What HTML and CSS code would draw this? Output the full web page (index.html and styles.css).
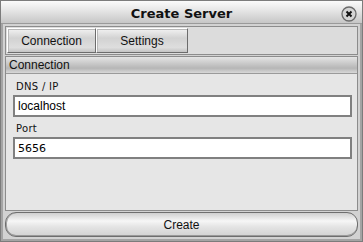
FILE: index.html
```
<!DOCTYPE html>
<html lang="en">
<head>
    <meta charset="UTF-8">
    <title>Create Server</title>
    <link rel="stylesheet" href="styles.css">
</head>
<body>
    <div class="window">
        <div class="titlebar">
            <span class="title">Create Server</span>
            <span class="close">
                <svg width="16" height="16" viewBox="0 0 16 16">
                    <circle cx="8" cy="8" r="7" fill="#d4d4d4" stroke="#6a6a6a" stroke-width="1.3"/>
                    <path d="M5.5 5.5 L10.5 10.5 M10.5 5.5 L5.5 10.5" stroke="#111" stroke-width="2"/>
                </svg>
            </span>
        </div>
        <div class="frame">
            <div class="tabs">
                <button class="tab">Connection</button>
                <button class="tab">Settings</button>
            </div>
            <div class="panel">
                <div class="panel-header">Connection</div>
                <div class="panel-body">
                    <label class="label">DNS / IP</label>
                    <input class="field" type="text" value="localhost">
                    <label class="label">Port</label>
                    <input class="field mono" type="text" value="5656">
                </div>
            </div>
            <button class="create">Create</button>
        </div>
    </div>
</body>
</html>
```

FILE: styles.css
```
body {
    margin: 0;
    font-family: 'Liberation Sans', Arial, sans-serif;
    background-color: #c8c8c8;
}

.window {
    width: 363px;
    height: 242px;
    box-sizing: border-box;
    border: 1px solid #7c7c7c;
    background-color: #d2d2d2;
    display: flex;
    flex-direction: column;
}

.titlebar {
    height: 22px;
    position: relative;
    display: flex;
    justify-content: center;
    align-items: center;
    background: linear-gradient(#fbfbfb, #e2e2e2 50%, #c6c6c6);
    border-bottom: 1px solid #9a9a9a;
}

.title {
    font-family: 'DejaVu Sans', sans-serif;
    font-weight: bold;
    font-size: 13px;
    color: #111;
    padding-top: 3px;
}

.close {
    position: absolute;
    right: 5px;
    top: 5px;
    width: 16px;
    height: 16px;
}

.frame {
    flex: 1;
    display: flex;
    flex-direction: column;
    padding: 2px 2px 2px 2px;
    border-left: 2px solid #a4a4a4;
    border-right: 2px solid #a4a4a4;
    border-bottom: 2px solid #a4a4a4;
}

.tabs {
    display: flex;
    padding: 1px;
    height: 25px;
    background-color: #dcdcdc;
    border: 1px solid #8c8c8c;
}

.tab {
    width: 89px;
    height: 25px;
    font-family: 'Liberation Sans', Arial, sans-serif;
    font-size: 12px;
    color: #111;
    background: linear-gradient(#f2f2f2, #d2d2d2 40%, #dedede 80%, #c4c4c4);
    border: 1px solid #6c6c6c;
    border-top-color: #ffffff;
    border-left-color: #ffffff;
    box-shadow: inset 1px 1px 0 #b8b8b8;
    padding: 0;
}

.tab + .tab {
    width: 92px;
}

.panel {
    flex: 1;
    margin-top: 1px;
    display: flex;
    flex-direction: column;
    background-color: #e6e6e6;
    border: 1px solid #8c8c8c;
}

.panel-header {
    height: 16px;
    line-height: 16px;
    padding-left: 3px;
    font-size: 12px;
    color: #111;
    background: linear-gradient(#e4e4e4, #b6b6b6 70%, #d8d8d8);
    border-bottom: 1px solid #9a9a9a;
}

.panel-body {
    display: flex;
    flex-direction: column;
    padding: 7px 5px 0 7px;
}

.label {
    font-family: 'DejaVu Sans', sans-serif;
    font-size: 10px;
    color: #111;
    padding-left: 3px;
    height: 14px;
    letter-spacing: 0.3px;
}

.field {
    height: 22px;
    box-sizing: border-box;
    border: 2px solid #808080;
    background-color: #fff;
    font-family: 'Liberation Sans', Arial, sans-serif;
    font-size: 12px;
    color: #000;
    padding: 0 3px;
    margin-bottom: 6px;
    outline: none;
}

.mono {
    font-family: 'DejaVu Sans', sans-serif;
    font-size: 11px;
}

.create {
    margin-top: 1px;
    height: 25px;
    border-radius: 11px;
    border: 1px solid #6e6e6e;
    background: linear-gradient(#cfcfcf, #f6f6f6 35%, #e4e4e4 60%, #d2d2d2);
    box-shadow: inset 0 -1px 0 #9a9a9a, inset 1px 0 0 #a0a0a0;
    font-family: 'Liberation Sans', Arial, sans-serif;
    font-size: 12px;
    color: #111;
    padding: 0;
}
```
